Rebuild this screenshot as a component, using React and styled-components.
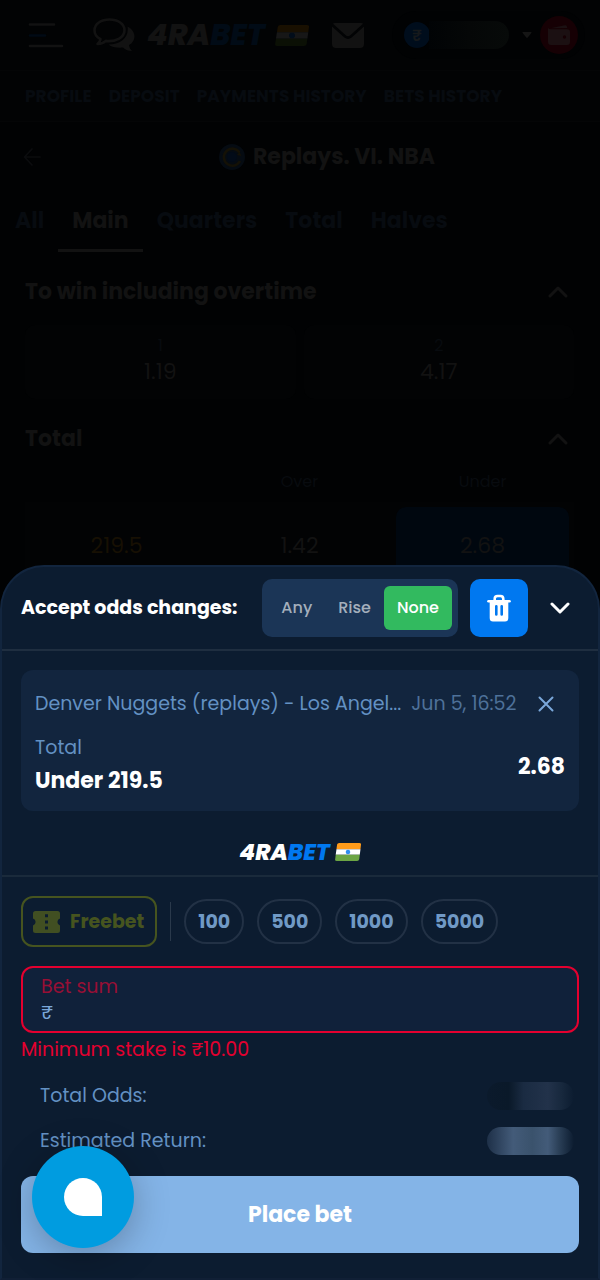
// src/App.jsx
import React, { useState } from 'react';
import styled, { createGlobalStyle } from 'styled-components';

const GlobalStyle = createGlobalStyle`
  * {
    box-sizing: border-box;
  }

  body {
    margin: 0;
    background: #010203;
    color: #121212;
    font-family: Poppins, Inter, 'Liberation Sans', sans-serif;
    font-size: 19px;
    line-height: 28px;
    overflow: hidden;
  }

  button, input {
    font: inherit;
    color: inherit;
    border: none;
    background: none;
    padding: 0;
  }

  button {
    cursor: pointer;
  }

  svg {
    display: block;
    flex: none;
  }
`;

/* ---------- page behind the bet slip ---------- */

const TopBar = styled.header`
  display: flex;
  align-items: center;
  height: 71px;
  padding: 0 15px 0 28px;
  background: #020304;
  border-bottom: 1px solid #040506;
`;

const Menu = styled.button`
  margin-right: 29px;
`;

const LogoRow = styled.div`
  display: flex;
  align-items: center;
  gap: ${({ $large }) => ($large ? '10px' : '5px')};
`;

const LogoText = styled.span`
  font-size: ${({ $large }) => ($large ? '30px' : '23px')};
  line-height: 28px;
  font-weight: 800;
  font-style: italic;
  color: ${({ $light }) => $light};

  b {
    font-weight: inherit;
    color: ${({ $blue }) => $blue};
  }
`;

const Chat = styled.button`
  margin-right: 12px;
`;

const Mail = styled.button`
  margin-left: auto;
`;

const Balance = styled.div`
  display: flex;
  align-items: center;
  height: 48px;
  margin-left: 28px;
  padding: 0 7px 0 12px;
  border-radius: 24px;
  background: #010203;
`;

const Coin = styled.span`
  display: grid;
  place-items: center;
  width: 26px;
  height: 26px;
  border-radius: 50%;
  background: #000d1c;
  color: #16191b;
  font-size: 16px;
  font-weight: 600;
`;

const HiddenSum = styled.span`
  width: 80px;
  height: 28px;
  margin: 0 13px 0 -1px;
  border-radius: 0 14px 14px 0;
  background: linear-gradient(90deg, #010305, #050707 50%, #070a09);
`;

const Wallet = styled.button`
  display: grid;
  place-items: center;
  width: 38px;
  height: 38px;
  margin-left: 8px;
  border-radius: 50%;
  background: #160004;
`;

const SubNav = styled.nav`
  display: flex;
  align-items: center;
  gap: 17px;
  height: 51px;
  padding: 0 25px;
  background: #020304;
  border-bottom: 1px solid #040506;
  font-size: 17px;
  font-weight: 700;
`;

const NavLink = styled.a`
  color: #070b10;
  text-decoration: none;
  white-space: nowrap;
`;

const TitleRow = styled.div`
  display: grid;
  grid-template-columns: 24px 1fr;
  align-items: center;
  height: 70px;
  padding: 0 20px;
`;

const Title = styled.h1`
  display: flex;
  align-items: center;
  justify-content: center;
  gap: 8px;
  margin: 0;
  padding-left: 30px;
  font-size: 22px;
  font-weight: 700;
`;

const Tabs = styled.div`
  display: flex;
  padding-left: 1px;
`;

const Tab = styled.button`
  height: 60px;
  padding: 0 14px;
  font-size: 22px;
  font-weight: 700;
  color: ${({ $active }) => ($active ? '#121212' : '#070b10')};
  border-bottom: 3px solid ${({ $active }) => ($active ? '#121212' : 'transparent')};
`;

const Section = styled.section`
  padding: 20px 26px 0 25px;
`;

const SectionHead = styled.div`
  display: flex;
  align-items: center;
  justify-content: space-between;
  height: 40px;
  padding-right: 6px;
  margin-bottom: 13px;

  h2 {
    margin: 0;
    font-size: 22px;
    font-weight: 700;
  }
`;

const Outcomes = styled.div`
  display: grid;
  grid-template-columns: 1fr 1fr;
  gap: 8px;
`;

const Outcome = styled.button`
  display: flex;
  flex-direction: column;
  align-items: center;
  justify-content: center;
  height: 74px;
  padding-bottom: 4px;
  border-radius: 10px;
  background: #020304;
  font-size: 22px;

  small {
    font-size: 16px;
    line-height: 24px;
    color: #080b0f;
  }
`;

const OddsTable = styled.table`
  width: 100%;
  table-layout: fixed;
  border-collapse: collapse;
  text-align: center;

  th {
    padding: 0 0 10px;
    font-size: 16px;
    line-height: 20px;
    font-weight: 400;
    color: #080b0f;
  }

  td {
    height: 88px;
    padding: 5px;
    background: #020304;
    font-size: 22px;
  }
`;

const OddsButton = styled.button`
  width: 100%;
  height: 78px;
  border-radius: 10px;
  background: ${({ $picked }) => ($picked ? '#00070f' : 'transparent')};
`;

const LineValue = styled.span`
  color: #171003;
`;

/* ---------- bet slip ---------- */

const Sheet = styled.main`
  position: fixed;
  left: 0;
  right: 0;
  bottom: 0;
  border: 2px solid #12253e;
  border-bottom-color: #101f35;
  border-radius: 44px 44px 0 0;
  background: #0c1c30;
  color: #6391c3;
`;

const SheetHead = styled.div`
  display: flex;
  align-items: center;
  height: 84px;
  padding: 0 28px 0 19px;
  border-bottom: 2px solid #1f2e40;
`;

const HeadLabel = styled.span`
  flex: 1;
  color: #fff;
  font-weight: 700;
  white-space: nowrap;
`;

const Segments = styled.div`
  display: flex;
  height: 58px;
  padding: 7px 6px;
  border-radius: 10px;
  background: #1b3556;
`;

const Segment = styled.button`
  padding: 0 13px;
  border-radius: 6px;
  font-size: 16px;
  font-weight: 500;
  color: ${({ $active }) => ($active ? '#fff' : '#a4afbc')};
  background: ${({ $active }) => ($active ? '#32ba5f' : 'transparent')};
`;

const ClearButton = styled.button`
  display: grid;
  place-items: center;
  width: 58px;
  height: 58px;
  margin: 0 22px 0 12px;
  border-radius: 10px;
  background: #0078f0;
`;

const Slip = styled.article`
  margin: 19px 19px 27px;
  height: 141px;
  padding: 20px 14px 14px;
  border-radius: 12px;
  background: #12253e;
`;

const SlipTop = styled.div`
  display: flex;
  align-items: center;
  margin-bottom: 16px;
  padding-right: 11px;
`;

const EventName = styled.span`
  flex: 1;
  white-space: nowrap;
`;

const EventDate = styled.time`
  margin: 0 22px 0 10px;
  color: #4e7199;
  white-space: nowrap;
`;

const SlipBody = styled.div`
  display: flex;
  align-items: center;
  justify-content: space-between;

  strong {
    display: block;
    color: #fff;
    font-size: 22px;
    line-height: 38px;
  }
`;

const Brand = styled.div`
  display: flex;
  justify-content: center;
  padding-bottom: 9px;
  border-bottom: 2px solid #1a2a3b;
`;

const BetForm = styled.form`
  padding: 19px 19px 25px;
`;

const StakeRow = styled.div`
  display: flex;
  align-items: center;
  gap: 13px;
  margin-bottom: 19px;
  font-weight: 700;
`;

const Freebet = styled.button`
  display: flex;
  align-items: center;
  gap: 10px;
  height: 51px;
  padding: 0 11px 0 10px;
  border: 2px solid #46541f;
  border-radius: 12px;
  color: #46541f;
`;

const Separator = styled.span`
  width: 1px;
  height: 39px;
  background: #2a394b;
`;

const Chip = styled.button`
  height: 45px;
  padding: 0 12px;
  border: 2px solid #223145;
  border-radius: 23px;
  color: #7099c5;
`;

const Field = styled.label`
  display: block;
  height: 67px;
  padding: 6px 18px;
  border: 2px solid #e4002f;
  border-radius: 12px;
  background: #10213a;
  color: #980f35;
  line-height: 26px;

  input {
    display: block;
    width: 100%;
    height: 26px;
    color: #7aa7d9;
    outline: none;
  }
`;

const ErrorText = styled.p`
  margin: 3px 0 18px;
  color: #e4002f;
`;

const Summary = styled.div`
  display: flex;
  align-items: center;
  justify-content: space-between;
  height: 28px;
  margin-bottom: 17px;
  padding: 0 5px 0 19px;
`;

const HiddenValue = styled.span`
  width: 87px;
  height: 28px;
  border-radius: 14px;
  background: ${({ $strong }) =>
    $strong
      ? 'linear-gradient(90deg, #1e3048, #435b79 30%, #3a526c 52%, #435b79 70%, #2c4159 82%, #0c1c30)'
      : 'linear-gradient(90deg, #0b1a2c, #0a1929 25%, #1a2b42 42%, #22324a 70%, #17283d 86%, #0c1c30)'};
`;

const PlaceBet = styled.button`
  display: block;
  width: 100%;
  height: 77px;
  margin-top: 21px;
  border-radius: 12px;
  background: #84b4e7;
  color: #fff;
  font-size: 22px;
  font-weight: 700;
`;

const ChatBubble = styled.button`
  position: fixed;
  left: 32px;
  bottom: 32px;
  display: grid;
  place-items: center;
  width: 102px;
  height: 102px;
  border-radius: 50%;
  background: #009ce0;
  box-shadow: 0 8px 36px rgba(0, 0, 0, 0.26);

  &::before {
    content: '';
    width: 38px;
    height: 38px;
    border-radius: 50% 50% 0 50%;
    background: #fff;
  }
`;

const Flag = ({ width, height, colors }) => (
  <svg width={width} height={height} viewBox="0 0 25 19" preserveAspectRatio="none" aria-hidden="true">
    <path d="M4 0H23.500Q25.200 0 25 1.700L24.500 6.500H1.400L2 1.700Q2.300 0 4 0Z" fill={colors[0]} />
    <path d="M1.400 6.500H24.500L23.800 12.500H.7Z" fill={colors[1]} />
    <path d="M.7 12.500H23.800L23.300 17.200Q23 19 21.300 19H1.700Q-.1 19 .1 17.300Z" fill={colors[2]} />
    <ellipse cx="12.500" cy="9.500" rx="2.200" ry="2.400" fill={colors[3]} />
  </svg>
);

const Logo = ({ large, light, blue, flag }) => (
  <LogoRow $large={large}>
    <LogoText $large={large} $light={light} $blue={blue}>
      4RA<b>BET</b>
    </LogoText>
    <Flag width={large ? 34 : 26} height={large ? 21 : 18} colors={flag} />
  </LogoRow>
);

const Chevron = ({ up, color }) => (
  <svg width="20" height="12" viewBox="0 0 20 12" fill="none" stroke={color} strokeWidth="3" strokeLinecap="round" strokeLinejoin="round">
    <path d={up ? 'M2 10L10 2L18 10' : 'M2 2L10 10L18 2'} />
  </svg>
);

const MenuIcon = () => (
  <svg width="36" height="26" viewBox="0 0 36 26" fill="none" strokeWidth="2.600" strokeLinecap="round">
    <path d="M2 2.500H26M2 24H34" stroke="#121212" />
    <path d="M2 13.500H17" stroke="#010a14" />
  </svg>
);

const ChatIcon = () => (
  <svg width="42" height="34" viewBox="0 0 42 34">
    <path d="M16.500 1.500C8 1.500 1.500 6 1.500 12.200C1.500 16.500 4.300 19.500 7.500 21.200C7.200 23 6 24.700 4.500 26C8 25.800 11 24.700 12.800 22.900C23.500 24.100 31.500 19 31.500 12.200C31.500 6 25 1.500 16.500 1.500Z" fill="none" stroke="#121212" strokeWidth="2.600" strokeLinejoin="round" />
    <path d="M34.500 8.500C43.500 13 43.500 23 36 27C36.300 29.500 37.500 31.500 39 33C35 33 31.500 31.500 30 29.600C24 30.200 18.500 29 15.500 26.500C27.500 26.500 36.500 19.500 34.500 8.500Z" fill="#121212" />
  </svg>
);

const MailIcon = () => (
  <svg width="32" height="25" viewBox="0 0 32 25" fill="#121212">
    <path d="M3 0H29Q30.200 0 31 .8L18.300 12.300Q16 14.300 13.700 12.300L1 .8Q1.800 0 3 0Z" />
    <path d="M0 3.500L12.300 14.600Q16 17.500 19.700 14.600L32 3.500V21Q32 25 28 25H4Q0 25 0 21Z" />
  </svg>
);

const WalletIcon = () => (
  <svg width="22" height="20" viewBox="0 0 22 20">
    <path d="M2.500 3.200L17 .3Q18.700 0 19 1.800L19.200 3Z" fill="#1b1012" />
    <path d="M0 3Q1 4.200 3 4.200H19Q22 4.200 22 7V17Q22 20 19 20H3Q0 20 0 17Z" fill="#1b1012" />
    <circle cx="16.500" cy="12" r="1.700" fill="#160004" />
  </svg>
);

const BackIcon = () => (
  <svg width="24" height="24" viewBox="0 0 24 24" fill="none" stroke="#0b0c0e" strokeWidth="1.700" strokeLinecap="round" strokeLinejoin="round">
    <path d="M20 12H4.500M12 4L4.500 12L12 20" />
  </svg>
);

const Emblem = () => (
  <svg width="26" height="26" viewBox="0 0 26 26" fill="none">
    <circle cx="13" cy="13" r="13" fill="#050b12" />
    <circle cx="13" cy="13" r="5" fill="#020b18" />
    <path d="M20.500 8.500A8.500 8.500 0 1 0 21 17" stroke="#141106" strokeWidth="2.600" />
    <path d="M20.500 8L22.500 12L18 11Z" fill="#141106" />
  </svg>
);

const TrashIcon = () => (
  <svg width="24" height="28" viewBox="0 0 24 28" fill="none">
    <path d="M7.700 7V5Q7.700 2 10.500 2H13.500Q16.300 2 16.300 5V7" stroke="#fff" strokeWidth="2.600" />
    <path d="M1.500 7.300H22.500" stroke="#fff" strokeWidth="2.600" strokeLinecap="round" />
    <path fillRule="evenodd" fill="#fff" d="M2.700 7H21.300V24Q21.300 27.500 18 27.500H6Q2.700 27.500 2.700 24ZM8 12.300V20.500Q8 21.700 9.300 21.700Q10.600 21.700 10.600 20.500V12.300Q10.600 11 9.300 11Q8 11 8 12.300ZM13.400 12.300V20.500Q13.400 21.700 14.700 21.700Q16 21.700 16 20.500V12.300Q16 11 14.700 11Q13.400 11 13.400 12.300Z" />
  </svg>
);

const CloseIcon = () => (
  <svg width="16" height="16" viewBox="0 0 16 16" stroke="#7aa7d9" strokeWidth="2" strokeLinecap="round">
    <path d="M1.500 1.500L14.500 14.500M14.500 1.500L1.500 14.500" />
  </svg>
);

const TicketIcon = () => (
  <svg width="27" height="22" viewBox="0 0 27 22" fill="#414f22">
    <path fillRule="evenodd" d="M2.500 0H24.500Q27 0 27 2.500V7.600Q24.400 8.500 24.400 11T27 14.400V19.500Q27 22 24.500 22H2.500Q0 22 0 19.500V14.400Q2.600 13.500 2.600 11T0 7.600V2.500Q0 0 2.500 0ZM12 3.300V6.200H15V3.300ZM12 9.500V12.500H15V9.500ZM12 15.500V18.500H15V15.500Z" />
  </svg>
);

const navItems = ['PROFILE', 'DEPOSIT', 'PAYMENTS HISTORY', 'BETS HISTORY'];
const tabs = ['All', 'Main', 'Quarters', 'Total', 'Halves'];
const outcomes = [{ name: '1', odds: '1.19' }, { name: '2', odds: '4.17' }];
const changeModes = ['Any', 'Rise', 'None'];
const stakes = [100, 500, 1000, 5000];

const dimFlag = ['#191001', '#171717', '#0b1005', '#020d1a'];
const brightFlag = ['#ff9b1a', '#ffffff', '#6ca544', '#2f8df0'];

const App = () => {
  const [tab, setTab] = useState('Main');
  const [mode, setMode] = useState('None');
  const [stake, setStake] = useState('₹');

  return (
    <>
      <GlobalStyle />
      <TopBar>
        <Menu aria-label="Menu"><MenuIcon /></Menu>
        <Chat aria-label="Chat"><ChatIcon /></Chat>
        <Logo large light="#121212" blue="#010b16" flag={dimFlag} />
        <Mail aria-label="Messages"><MailIcon /></Mail>
        <Balance>
          <Coin>₹</Coin>
          <HiddenSum />
          <svg width="10" height="6" viewBox="0 0 10 6"><path d="M1 0H9Q10 0 9.400 1L5.700 5.500Q5 6.300 4.300 5.500L.6 1Q0 0 1 0Z" fill="#151515" /></svg>
          <Wallet aria-label="Wallet"><WalletIcon /></Wallet>
        </Balance>
      </TopBar>
      <SubNav>
        {navItems.map((item) => (
          <NavLink href="#" key={item}>{item}</NavLink>
        ))}
      </SubNav>
      <TitleRow>
        <button aria-label="Back"><BackIcon /></button>
        <Title><Emblem />Replays. VI. NBA</Title>
      </TitleRow>
      <Tabs>
        {tabs.map((name) => (
          <Tab key={name} $active={name === tab} onClick={() => setTab(name)}>{name}</Tab>
        ))}
      </Tabs>
      <Section>
        <SectionHead>
          <h2>To win including overtime</h2>
          <Chevron up color="#121212" />
        </SectionHead>
        <Outcomes>
          {outcomes.map(({ name, odds }) => (
            <Outcome key={name}><small>{name}</small>{odds}</Outcome>
          ))}
        </Outcomes>
      </Section>
      <Section>
        <SectionHead>
          <h2>Total</h2>
          <Chevron up color="#121212" />
        </SectionHead>
        <OddsTable>
          <thead>
            <tr><th /><th>Over</th><th>Under</th></tr>
          </thead>
          <tbody>
            <tr>
              <td><LineValue>219.5</LineValue></td>
              <td><OddsButton>1.42</OddsButton></td>
              <td><OddsButton $picked>2.68</OddsButton></td>
            </tr>
          </tbody>
        </OddsTable>
      </Section>

      <Sheet>
        <SheetHead>
          <HeadLabel>Accept odds changes:</HeadLabel>
          <Segments>
            {changeModes.map((name) => (
              <Segment key={name} $active={name === mode} onClick={() => setMode(name)}>{name}</Segment>
            ))}
          </Segments>
          <ClearButton aria-label="Clear bet slip"><TrashIcon /></ClearButton>
          <button aria-label="Collapse"><Chevron color="#fff" /></button>
        </SheetHead>
        <Slip>
          <SlipTop>
            <EventName>Denver Nuggets (replays) - Los Angel...</EventName>
            <EventDate>Jun 5, 16:52</EventDate>
            <button aria-label="Remove bet"><CloseIcon /></button>
          </SlipTop>
          <SlipBody>
            <div>
              Total
              <strong>Under 219.5</strong>
            </div>
            <strong>2.68</strong>
          </SlipBody>
        </Slip>
        <Brand>
          <Logo light="#fff" blue="#0078f0" flag={brightFlag} />
        </Brand>
        <BetForm onSubmit={(e) => e.preventDefault()}>
          <StakeRow>
            <Freebet type="button"><TicketIcon />Freebet</Freebet>
            <Separator />
            {stakes.map((value) => (
              <Chip type="button" key={value} onClick={() => setStake(`₹${value}`)}>{value}</Chip>
            ))}
          </StakeRow>
          <Field>
            Bet sum
            <input value={stake} onChange={(e) => setStake(e.target.value)} />
          </Field>
          <ErrorText>Minimum stake is ₹10.00</ErrorText>
          <Summary>Total Odds:<HiddenValue /></Summary>
          <Summary>Estimated Return:<HiddenValue $strong /></Summary>
          <PlaceBet>Place bet</PlaceBet>
        </BetForm>
      </Sheet>
      <ChatBubble aria-label="Support chat" />
    </>
  );
};

export default App;
